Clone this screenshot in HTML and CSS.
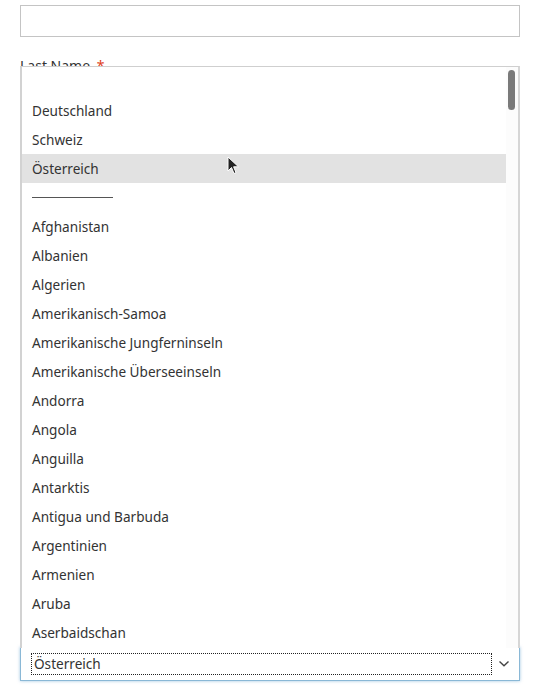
FILE: index.html
```html
<!DOCTYPE html>
<html lang="de">
<head>
<meta charset="utf-8">
<title>Form</title>
<link rel="stylesheet" href="styles.css">
</head>
<body>
<div class="page">
  <input class="text-input" type="text">
  <label class="field-label">Last Name <span class="req">*</span></label>
  <div class="spacer"></div>
  <div class="select">
    <span class="select-value">Österreich</span>
    <svg class="chevron" width="12" height="8" viewBox="0 0 12 8"><path d="M1.5 1.5 L6 5.8 L10.5 1.5" fill="none" stroke="#444" stroke-width="1.4"/></svg>
  </div>

  <div class="popup">
    <ul class="options">
      <li class="opt"></li>
      <li class="opt">Deutschland</li>
      <li class="opt">Schweiz</li>
      <li class="opt hover">Österreich</li>
      <li class="opt sep"><span class="sep-line"></span></li>
      <li class="opt">Afghanistan</li>
      <li class="opt">Albanien</li>
      <li class="opt">Algerien</li>
      <li class="opt">Amerikanisch-Samoa</li>
      <li class="opt">Amerikanische Jungferninseln</li>
      <li class="opt">Amerikanische Überseeinseln</li>
      <li class="opt">Andorra</li>
      <li class="opt">Angola</li>
      <li class="opt">Anguilla</li>
      <li class="opt">Antarktis</li>
      <li class="opt">Antigua und Barbuda</li>
      <li class="opt">Argentinien</li>
      <li class="opt">Armenien</li>
      <li class="opt">Aruba</li>
      <li class="opt">Aserbaidschan</li>
    </ul>
    <div class="track"><div class="thumb"></div></div>
  </div>

  <svg class="cursor" width="14" height="20" viewBox="0 0 14 20"><path d="M1 1 L1 15 L4.5 11.5 L7 17.5 L9 16.6 L6.6 10.8 L11.5 10.8 Z" fill="#222" stroke="#fff" stroke-width="1"/></svg>
</div>
</body>
</html>
```
FILE: styles.css
```css
html, body {
  margin: 0;
  padding: 0;
  background: #fff;
}
.page {
  position: relative;
  width: 548px;
  height: 696px;
  padding: 5px 28px 0 20px;
  box-sizing: border-box;
  display: flex;
  flex-direction: column;
  font-family: "Noto Sans", "Open Sans", sans-serif;
  font-size: 13.6px;
  color: #333;
}
.text-input {
  display: block;
  width: 500px;
  height: 32px;
  box-sizing: border-box;
  border: 1px solid #c4c4c4;
  margin: 0;
  padding: 0 10px;
  background: #fff;
}
.field-label {
  display: block;
  margin-top: 19px;
  line-height: 20px;
  font-size: 14px;
  color: #333;
}
.req {
  color: #e0401a;
  margin-left: 3px;
}
.spacer { flex: 1; }
.select {
  width: 500px;
  height: 34px;
  box-sizing: border-box;
  border: 1px solid #8ab8d6;
  box-shadow: 0 0 3px rgba(80, 150, 200, 0.55);
  margin-bottom: 15px;
  display: flex;
  align-items: center;
  padding: 0 9px 0 11px;
  background: #fff;
}
.select-value {
  flex: 1;
  height: 20px;
  line-height: 20px;
  outline: 1px dotted #222;
  padding-left: 2px;
  margin-right: 7px;
  color: #333;
}
.chevron { display: block; }

.popup {
  position: absolute;
  left: 20px;
  top: 66px;
  width: 500px;
  height: 582px;
  box-sizing: border-box;
  border-top: 1px solid #cfcfcf;
  border-left: 2px solid #d2d2d2;
  border-right: 2px solid #d6d6d6;
  background: #fff;
  overflow: hidden;
}
.options {
  list-style: none;
  margin: 0;
  padding: 0;
  width: 486px;
}
.opt {
  height: 29px;
  box-sizing: border-box;
  padding-top: 1px;
  line-height: 28px;
  padding-left: 10px;
  white-space: nowrap;
  color: #333;
}
.opt.hover { background: #e2e2e2; }
.opt.sep {
  display: flex;
  align-items: center;
}
.sep-line {
  display: block;
  width: 81px;
  height: 0;
  border-top: 1px solid #555;
  margin-top: -2px;
}
.track {
  position: absolute;
  top: 0;
  right: 0;
  width: 12px;
  height: 100%;
  background: #fcfcfc;
}
.thumb {
  position: absolute;
  top: 3px;
  left: 2px;
  width: 7px;
  height: 40px;
  border-radius: 4px;
  background: #7a7a7a;
}
.cursor {
  position: absolute;
  left: 227px;
  top: 156px;
}
```
